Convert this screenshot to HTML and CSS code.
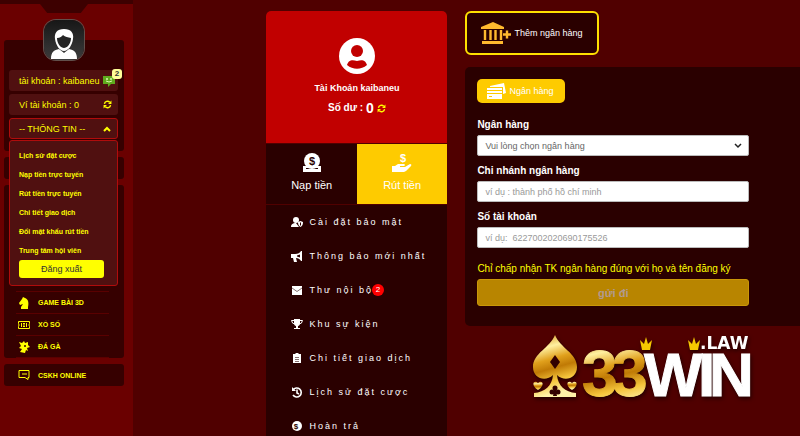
FILE: index.html
```html
<!DOCTYPE html>
<html lang="vi">
<head>
    <meta charset="UTF-8">
    <meta name="viewport" content="width=device-width, initial-scale=1.0">
    <title>33WIN</title>
    <link rel="stylesheet" href="styles.css">
</head>
<body>
    <svg class="defs" width="0" height="0">
        <symbol id="refresh" viewBox="0 0 16 16">
            <path d="M2.500 7A5.600 5.600 0 0 1 12 4M13.500 9A5.600 5.600 0 0 1 4 12" fill="none" stroke="currentColor" stroke-width="2.400"/>
            <path d="M15 1v6H9zM1 15V9h6z" fill="currentColor"/>
        </symbol>
    </svg>
    <div class="page">
        <aside class="sidebar">
            <div class="notch"></div>
            <div class="avatar">
                <svg viewBox="0 0 40 40" width="40" height="40">
                    <path d="M7 39c0-7 3-9 8-10l5 4 5-4c5 1 8 3 8 10z" fill="#fff"/>
                    <path d="M11 19c-1-6 2-10 9-10s10 4 9 10c-1 7-5 12-9 12s-8-5-9-12z" fill="#fff"/>
                    <path d="M13 18c3 0 5-2 6-3 2 2 5 2 8 3 0 6-4 10-7 10s-7-4-7-10z" fill="#252525"/>
                </svg>
            </div>
            <div class="box account">
                <div class="row">
                    <span>tài khoản : kaibaneu</span>
                    <a href="#" class="msg" aria-label="Tin nhắn">
                        <svg viewBox="0 0 12 12" width="12" height="12">
                            <path d="M0 1h12v8H8l-3 3V9H0z" fill="#5faa1d"/>
                            <circle cx="4" cy="4" r="1" fill="#d9f5b0"/>
                            <circle cx="8" cy="4" r="1" fill="#d9f5b0"/>
                            <path d="M3 6q3 2 6 0" fill="none" stroke="#d9f5b0"/>
                        </svg>
                        <b>2</b>
                    </a>
                </div>
                <div class="row">
                    <span>Ví tài khoản : 0</span>
                    <svg width="9" height="9"><use href="#refresh"/></svg>
                </div>
                <button class="row toggle" type="button">
                    <span>-- THÔNG TIN --</span>
                    <svg viewBox="0 0 8 6" width="8" height="6"><path d="M1 5l3-3 3 3" fill="none" stroke="#ff0" stroke-width="2"/></svg>
                </button>
                <div class="popup">
                    <a href="#">Lịch sử đặt cược</a>
                    <a href="#">Nạp tiền trực tuyến</a>
                    <a href="#">Rút tiền trực tuyến</a>
                    <a href="#">Chi tiết giao dịch</a>
                    <a href="#">Đổi mật khẩu rút tiền</a>
                    <a href="#">Trung tâm hội viên</a>
                    <button type="button">Đăng xuất</button>
                </div>
            </div>
            <div class="box strip"></div>
            <div class="box games">
                <a href="#">
                    <svg viewBox="0 0 12 12" width="12" height="12"><circle cx="6" cy="6" r="4" fill="none" stroke="#ff0" stroke-width="2"/></svg>
                </a>
                <a href="#">
                    <svg viewBox="0 0 12 12" width="12" height="12"><path d="M3 12v-2l2-3-3 1-1-2 3-4 1-2 2 1c3 1 4 4 3 9v2z" fill="#ff0"/></svg>
                    GAME BÀI 3D
                </a>
                <a href="#">
                    <svg viewBox="0 0 12 12" width="12" height="12"><path d="M.5 2.500h11v2q-1 1.500 0 3v2H.5v-2q1-1.500 0-3zM3.500 4v4M8.500 4v4M5 4.500h2M5 6h2M5 7.500h2" fill="none" stroke="#ff0"/></svg>
                    XỔ SỐ
                </a>
                <a href="#">
                    <svg viewBox="0 0 12 12" width="12" height="12"><path d="M1 1l3 1 2-2 1 2 3-1v3l2 2-3 1 1 3-2-1-1 3-5-1 2-3-3-1 2-2z" fill="#ff0"/><circle cx="7" cy="5" r="1" fill="#360000"/></svg>
                    ĐÁ GÀ
                </a>
            </div>
            <div class="box games support">
                <a href="#">
                    <svg viewBox="0 0 12 12" width="12" height="12"><path d="M1 1.500h10v7h-1v2l-3-2H1zM4 5h5" fill="none" stroke="#ff0"/></svg>
                    CSKH ONLINE
                </a>
            </div>
        </aside>

        <main class="main">
            <section class="profile">
                <div class="user">
                    <svg viewBox="0 0 36 36" width="36" height="36">
                        <circle cx="18" cy="18" r="18" fill="#fff"/>
                        <circle cx="18" cy="13" r="6" fill="#c10000"/>
                        <path d="M8 27c2-6 6-5 10-4 4-1 8-2 10 4-6 5-14 5-20 0z" fill="#c10000"/>
                    </svg>
                    <h1>Tài Khoản kaibaneu</h1>
                    <p>Số dư : <b>0</b> <svg width="9" height="9"><use href="#refresh"/></svg></p>
                </div>
                <nav class="tabs">
                    <a href="#">
                        <svg viewBox="0 0 20 20" width="20" height="20">
                            <path d="M1 13h18v6H1z" fill="#fff"/>
                            <path d="M4 15.500h12" stroke="#2a0000"/>
                            <circle cx="10" cy="8" r="8" fill="#fff"/>
                            <text class="coin" x="10" y="12">$</text>
                        </svg>
                        Nạp tiền
                    </a>
                    <a href="#" class="current">
                        <svg viewBox="0 0 20 20" width="20" height="20">
                            <text class="coin white" x="11" y="9">$</text>
                            <path d="M0 13h3l3-2h6q2 1 0 2H8v1h5l5-3q2 0 1 2l-5 5-2 1H0z" fill="#fff"/>
                        </svg>
                        Rút tiền
                    </a>
                </nav>
                <ul class="links">
                    <li><a href="#">
                        <svg viewBox="0 0 12 12" width="12" height="12"><circle cx="5" cy="4" r="3" fill="#fff"/><path d="M0 11c0-3 2-4 5-4l3 4z" fill="#fff"/><path d="M7 6l2.500-1L12 6c0 3-1 4-2.500 5C8 10 7 9 7 6z" fill="#fff"/><path d="M9.500 6.500v3" stroke="#2a0000"/></svg>
                        Cài đặt bảo mật</a></li>
                    <li><a href="#">
                        <svg viewBox="0 0 12 12" width="12" height="12"><path d="M0 4h4c3 0 5-1 6-3h1v10h-1C9 9 7 8 5 8l1 4H3L2 8H0z" fill="#fff"/><path d="M6 5.500l3-1v3l-3-1z" fill="#2a0000"/></svg>
                        Thông báo mới nhất</a></li>
                    <li><a href="#">
                        <svg viewBox="0 0 12 12" width="12" height="12"><path d="M1 2h10v9H1z" fill="#fff"/><path d="M1 4l5 3.500L11 4" fill="none" stroke="#857070"/></svg>
                        Thư nội bộ<b class="count">2</b></a></li>
                    <li><a href="#">
                        <svg viewBox="0 0 12 12" width="12" height="12"><path d="M3 1h6v4c0 2-1 3-2 3v2h2v1H3v-1h2V8C4 8 3 7 3 5z" fill="#fff"/><path d="M3 2.500H.5Q1 6 4 6M9 2.500h2.500Q11 6 8 6" fill="none" stroke="#fff"/></svg>
                        Khu sự kiện</a></li>
                    <li><a href="#">
                        <svg viewBox="0 0 12 12" width="12" height="12"><path d="M2 2h2l1-1h2l1 1h2v9H2z" fill="#fff"/><path d="M4 5.500h4M4 7.500h4M4 9.500h4" stroke="#857070"/></svg>
                        Chi tiết giao dịch</a></li>
                    <li><a href="#">
                        <svg viewBox="0 0 12 12" width="12" height="12"><path d="M2 4a4.500 4.500 0 1 1 0 5M6 3.500V7l2 1" fill="none" stroke="#fff" stroke-width="1.600"/><path d="M1 1v4h4z" fill="#fff"/></svg>
                        Lịch sử đặt cược</a></li>
                    <li><a href="#">
                        <svg viewBox="0 0 12 12" width="12" height="12"><circle cx="6" cy="6" r="5" fill="#fff"/><text class="coin small" x="6" y="9">$</text></svg>
                        Hoàn trả</a></li>
                </ul>
            </section>

            <section class="bank">
                <button class="add" type="button">
                    <svg viewBox="0 0 30 24" width="30" height="24">
                        <path d="M0 6L12 1l11 5v2H0zM1 20h21v3H1z" fill="#ffb92e"/>
                        <path d="M4 9v10M9.500 9v10M14.500 9v10M20 9v10" stroke="#ffb92e" stroke-width="2.400"/>
                        <path d="M22 13.500h8M26 9.500v8" stroke="#ffb92e" stroke-width="2.400"/>
                    </svg>
                    Thêm ngân hàng
                </button>
                <form class="card">
                    <button class="type" type="button">
                        <svg viewBox="0 0 19 16" width="19" height="16">
                            <path d="M3 3l14-3 2 10-3 1V4H3z" fill="#fff"/>
                            <path d="M0 5h15v11H0z" fill="#fff"/>
                            <path d="M0 7.500h15M0 10.500h15M2 13.500h3" stroke="#fecb00"/>
                        </svg>
                        Ngân hàng
                    </button>
                    <label for="bank">Ngân hàng</label>
                    <select id="bank">
                        <option>Vui lòng chọn ngân hàng</option>
                    </select>
                    <label for="branch">Chi nhánh ngân hàng</label>
                    <input id="branch" type="text" placeholder="ví dụ : thành phố hồ chí minh">
                    <label for="number">Số tài khoản</label>
                    <input id="number" type="text" placeholder="ví dụ:  6227002020690175526">
                    <p>Chỉ chấp nhận TK ngân hàng đúng với họ và tên đăng ký</p>
                    <button class="submit" type="submit" disabled>gửi đi</button>
                </form>
                <a href="#" class="logo" aria-label="33WIN.LAW">
                    <svg viewBox="0 0 230 84" width="230" height="84">
                        <defs>
                            <linearGradient id="gold" x1="0" y1="0" x2="0.200" y2="1">
                                <stop offset="0" stop-color="#d18a0a"/>
                                <stop offset="0.250" stop-color="#fff0a0"/>
                                <stop offset="0.450" stop-color="#e0a01c"/>
                                <stop offset="0.600" stop-color="#c07a05"/>
                                <stop offset="0.800" stop-color="#f5c53c"/>
                                <stop offset="1" stop-color="#fff2a8"/>
                            </linearGradient>
                        </defs>
                        <g fill="url(#gold)">
                            <path d="M26 1C31 14 48 19 48 33c0 12-13 15-20 8 1 11 8 17 19 18v4H5v-4c11-1 18-7 19-18-7 7-20 4-20-8C4 19 21 14 26 1z"/>
                            <path d="M9 56c-8-5-4-11 0-7 4-4 8 2 0 7zM43 56c-8-5-4-11 0-7 4-4 8 2 0 7z"/>
                            <text class="digits" x="53 83" y="62">33</text>
                        </g>
                        <path d="M26 21l5 7-5 7-5-7z" fill="#300"/>
                        <g fill="#300">
                            <circle cx="26" cy="54" r="2.500"/>
                            <circle cx="23" cy="58" r="2.500"/>
                            <circle cx="29" cy="58" r="2.500"/>
                            <path d="M25 56h2l1 6h-4z"/>
                        </g>
                        <text class="win" x="115 169 180" y="62">WIN</text>
                        <text class="law" x="171" y="15">.LAW</text>
                        <path d="M111 6l4 4 2-7 2 7 4-4-2 10h-8zM159 6l4 4 2-7 2 7 4-4-2 10h-8z" fill="#f5c800"/>
                    </svg>
                </a>
            </section>
        </main>
    </div>
</body>
</html>
```
FILE: styles.css
```css
* {
    padding: 0;
    margin: 0;
    box-sizing: border-box;
}

body {
    background: #500000;
    color: #fff;
    font-family: "Liberation Sans", Arial, sans-serif;
    font-size: 10px;
    height: 100vh;
    overflow: hidden;
}

button, input, select {
    font-family: inherit;
}

a {
    color: inherit;
    text-decoration: none;
}

svg {
    flex: none;
}

ul {
    list-style: none;
}

.defs {
    position: absolute;
}

.page {
    display: grid;
    grid-template-columns: 133px minmax(0, 1fr);
    height: 100%;
}

/* sidebar */
.sidebar {
    background: #6a0000;
    border-top: 4px solid #3d0000;
    padding: 0 9px 0 4px;
    color: #ff0;
    position: relative;
}

.notch {
    width: 48px;
    height: 9px;
    margin: 0 auto;
    background: #3d0000;
    clip-path: polygon(0 0, 100% 0, 85% 100%, 15% 100%);
}

.avatar {
    width: 40px;
    height: 40px;
    margin: 7px auto 0;
    border-radius: 12px;
    background: linear-gradient(#171717, #3c3c3c);
    box-shadow: 0 0 0 1px #62504c;
    overflow: hidden;
    position: relative;
    z-index: 1;
}

.box {
    background: #360000;
    border-radius: 3px;
    margin-bottom: 6px;
}

.account {
    display: flex;
    flex-direction: column;
    gap: 3px;
    margin-top: -20px;
    padding: 30px 6px 12px 5px;
    position: relative;
}

.row {
    display: flex;
    align-items: center;
    justify-content: space-between;
    height: 21px;
    padding: 0 6px 0 10px;
    background: #501010;
    border: 0;
    border-radius: 3px;
    color: #ff0;
    font-size: 9px;
}

.toggle {
    border: 1px solid #b00c0c;
    padding-left: 9px;
}

.msg {
    display: flex;
    margin-right: -3px;
    position: relative;
}

.msg b {
    position: absolute;
    top: -6px;
    right: -7px;
    width: 10px;
    border-radius: 3px;
    background: #ffff99;
    color: #333;
    font-size: 8px;
    line-height: 10px;
    text-align: center;
}

.popup {
    display: flex;
    flex-direction: column;
    position: absolute;
    top: 100px;
    left: 5px;
    right: 6px;
    z-index: 2;
    padding: 5px 13px 7px 9px;
    background: #501010;
    border: 1px solid #b00c0c;
    border-radius: 3px;
    font-size: 7px;
    font-weight: bold;
    line-height: 19px;
}

.popup button {
    height: 18px;
    border: 0;
    border-radius: 3px;
    background: #ff0;
    color: #333;
    font-size: 9px;
}

.strip {
    height: 22px;
}

.games {
    padding: 0 15px 0 12px;
    font-size: 7px;
    font-weight: bold;
}

.games a {
    display: flex;
    align-items: center;
    gap: 8px;
    height: 22px;
    padding-left: 2px;
    border-bottom: 1px solid #5a0000;
}

.games a:first-child {
    height: 107px;
    align-items: flex-end;
    padding-bottom: 4px;
}

.support a:first-child {
    height: 22px;
    align-items: center;
    padding-bottom: 0;
    border: 0;
}

/* main */
.main {
    display: grid;
    grid-template-columns: 181px minmax(0, 1fr);
    gap: 18px;
    padding-top: 11px;
    margin-left: 20%;
}

.profile {
    background: #2a0000;
    border-radius: 5px 5px 0 0;
    overflow: hidden;
}

.user {
    display: flex;
    flex-direction: column;
    align-items: center;
    height: 132px;
    padding-top: 27px;
    background: #c10000;
}

.user h1 {
    margin-top: 8px;
    font-size: 9px;
    line-height: 12px;
}

.user p {
    display: flex;
    align-items: center;
    gap: 3px;
    margin-top: 6px;
    font-weight: bold;
    line-height: 16px;
}

.user p b {
    font-size: 14px;
}

.user p svg {
    color: #ff0;
}

.tabs {
    display: grid;
    grid-template-columns: 1fr 1fr;
    border-top: 1px solid #500000;
    border-bottom: 1px solid #500000;
}

.tabs a {
    display: flex;
    flex-direction: column;
    align-items: center;
    gap: 4px;
    height: 60px;
    padding-top: 9px;
    font-size: 11px;
    line-height: 16px;
}

.tabs a.current {
    background: #fecb00;
}

.coin {
    fill: #2a0000;
    font-size: 11px;
    font-weight: bold;
    text-anchor: middle;
}

.coin.white {
    fill: #fff;
}

.coin.small {
    font-size: 8px;
}

.links a {
    display: flex;
    align-items: center;
    gap: 6px;
    height: 34px;
    padding-left: 25px;
    font-size: 9px;
    letter-spacing: 2px;
}

.count {
    width: 12px;
    margin-left: -7px;
    border-radius: 6px;
    background: #f00;
    font-size: 8px;
    font-weight: normal;
    line-height: 12px;
    letter-spacing: 0;
    text-align: center;
}

/* bank form */
.add {
    display: flex;
    align-items: center;
    gap: 3px;
    height: 44px;
    padding: 0 15px 0 14px;
    background: #2a0000;
    border: 2px solid #ffe000;
    border-radius: 6px;
    color: #fff;
    font-size: 9px;
}

.card {
    display: flex;
    flex-direction: column;
    margin-top: 12px;
    padding: 12px 51px 20px 12px;
    background: #2a0000;
    border-radius: 5px 0 0 5px;
}

.type {
    display: flex;
    align-items: center;
    align-self: flex-start;
    gap: 3px;
    height: 24px;
    margin-bottom: 15px;
    padding: 0 12px 0 10px;
    background: #fecb00;
    border: 0;
    border-radius: 5px;
    color: #fff;
    font-size: 9px;
}

.card label {
    margin-bottom: 3px;
    font-weight: bold;
    line-height: 14px;
}

.card input, .card select {
    height: 21px;
    margin-bottom: 8px;
    padding: 0 7px;
    background: #fff;
    border: 1px solid #bbb;
    border-radius: 2px;
    color: #666;
    font-size: 9px;
}

.card select {
    appearance: none;
    background: #fff url("data:image/svg+xml,%3Csvg xmlns='http://www.w3.org/2000/svg' viewBox='0 0 8 6'%3E%3Cpath d='M1 1l3 3 3-3' fill='none' stroke='%23222' stroke-width='1.500'/%3E%3C/svg%3E") no-repeat right 6px center / 8px 6px;
}

.card input::placeholder {
    color: #999;
    white-space: pre;
}

.card p {
    margin: 6px 0 3px;
    color: #ff0;
    line-height: 14px;
}

.submit {
    height: 27px;
    background: #b88500;
    border: 1px solid #c99708;
    border-radius: 3px;
    color: #b09a90;
    font-size: 11px;
    font-weight: bold;
}

.logo {
    display: block;
    margin: 8px 0 0 64px;
    filter: drop-shadow(1px 2px 2px #200000);
}

.digits {
    font-size: 64px;
    font-weight: bold;
    stroke: url(#gold);
}

.win, .law {
    fill: #fff;
    font-weight: bold;
}

.win {
    font-size: 62px;
    stroke: #fff;
}

.law {
    font-family: "DejaVu Sans", sans-serif;
    font-size: 17px;
}
```
